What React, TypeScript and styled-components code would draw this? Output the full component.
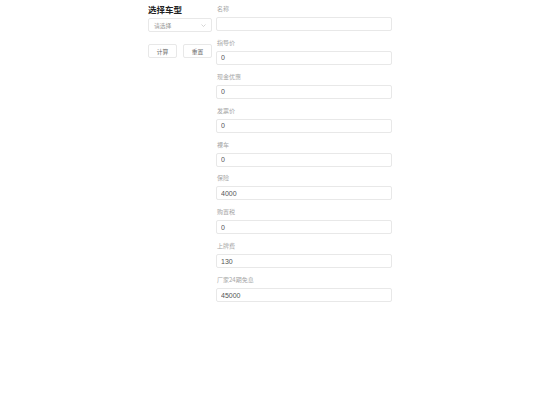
import React from 'react'
import styled, { createGlobalStyle } from 'styled-components'

const GlobalStyle = createGlobalStyle`
  body {
    margin: 0;
    background: #fff;
    font-family: "Noto Sans CJK SC", "Noto Sans", sans-serif;
  }
`

const Page = styled.div`
  display: flex;
  gap: 4px;
  width: 244px;
  margin: 0 auto;
  padding-top: 5px;
`

const Sidebar = styled.div`
  display: flex;
  flex-direction: column;
  width: 64px;
`

const Title = styled.div`
  height: 8px;
  font-size: 8.5px;
  line-height: 8px;
  font-weight: 700;
  color: #222;
  white-space: nowrap;
`

const Select = styled.div`
  display: flex;
  align-items: center;
  justify-content: space-between;
  height: 14px;
  margin-top: 5px;
  padding: 0 5px;
  box-sizing: border-box;
  border: 1px solid #e8e8e8;
  border-radius: 2px;
  font-size: 5.8px;
  color: #999;
`

const Buttons = styled.div`
  display: flex;
  justify-content: space-between;
  margin-top: 12px;
`

const Button = styled.button`
  width: 29px;
  height: 14px;
  padding: 0;
  border: 1px solid #e8e8e8;
  border-radius: 2px;
  background: #fff;
  font-family: inherit;
  font-size: 5.8px;
  color: #666;
`

const Form = styled.div`
  display: flex;
  flex-direction: column;
  width: 176px;
`

const Field = styled.div`
  display: flex;
  flex-direction: column;
  height: 33.9px;
`

const Label = styled.label`
  height: 8px;
  font-size: 6px;
  line-height: 8px;
  color: #a6a6a6;
  padding-left: 1px;
  margin-bottom: 4px;
  white-space: nowrap;
`

const Input = styled.input`
  height: 14px;
  box-sizing: border-box;
  padding: 0 0 0 4px;
  border: 1px solid #e8e8e8;
  border-radius: 2px;
  font-family: "Liberation Sans", Arial, sans-serif;
  font-size: 7px;
  color: #555;
  outline: none;
`

const fields: [string, string][] = [
  ['名称', ''],
  ['指导价', '0'],
  ['现金优惠', '0'],
  ['发票价', '0'],
  ['裸车', '0'],
  ['保险', '4000'],
  ['购置税', '0'],
  ['上牌费', '130'],
  ['厂家24期免息', '45000'],
]

export default function App() {
  return (
    <>
      <GlobalStyle />
      <Page>
        <Sidebar>
          <Title>选择车型</Title>
          <Select>
            <span>请选择</span>
            <svg width="5" height="3" viewBox="0 0 10 6" fill="none" stroke="#bbb" strokeWidth="1.2">
              <path d="M1 1l4 4 4-4" />
            </svg>
          </Select>
          <Buttons>
            <Button>计算</Button>
            <Button>重置</Button>
          </Buttons>
        </Sidebar>
        <Form>
          {fields.map(([label, value]) => (
            <Field key={label}>
              <Label>{label}</Label>
              <Input defaultValue={value} />
            </Field>
          ))}
        </Form>
      </Page>
    </>
  )
}
